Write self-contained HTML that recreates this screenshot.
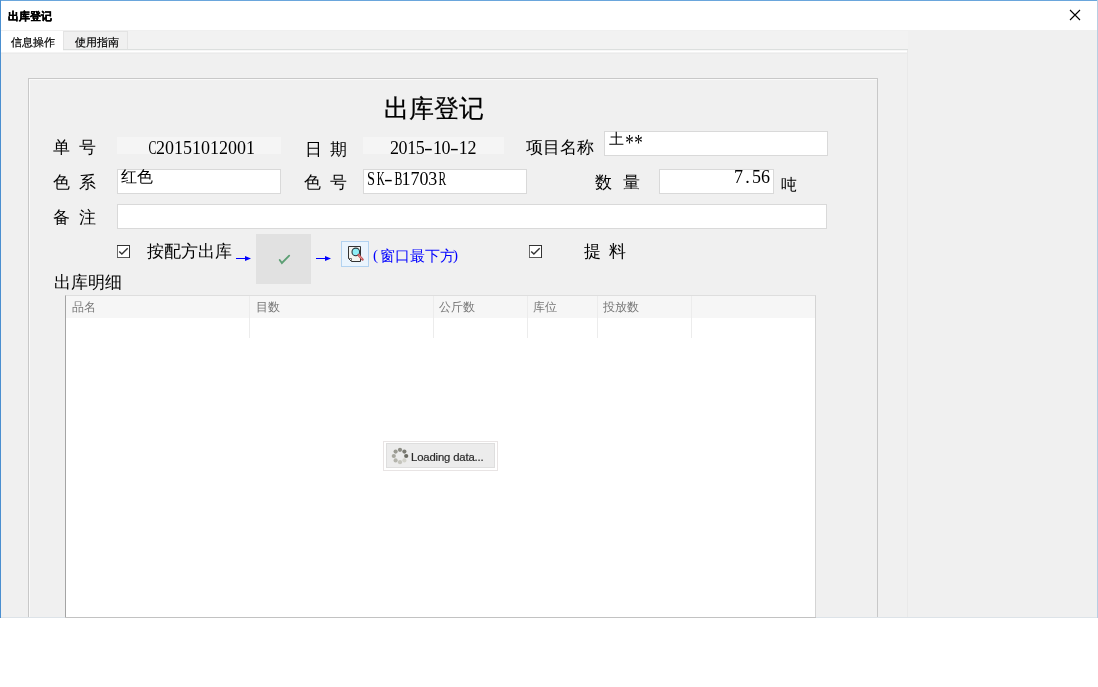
<!DOCTYPE html>
<html><head><meta charset="utf-8">
<style>
html,body{margin:0;padding:0;width:1098px;height:687px;overflow:hidden;background:#fff;font-family:"Liberation Sans",sans-serif;}
.a{position:absolute;}
.t{position:absolute;white-space:nowrap;line-height:1;color:#000;}
#win{position:absolute;left:0;top:0;width:1098px;height:618px;background:#f0f0f0;overflow:hidden;will-change:transform;}
</style></head><body>
<div id="win">
<div class="a" style="left:0px;top:0px;width:1098px;height:30px;background:#fff"></div>
<div class="t" style="left:8px;top:11px;font-size:11px;font-weight:bold;-webkit-text-stroke:0.35px #000">出库登记</div>
<svg class="a" style="left:1069px;top:9px" width="12" height="12" viewBox="0 0 12 12"><path d="M1 1L11 11M11 1L1 11" stroke="#000" stroke-width="1.1" fill="none"/></svg>
<div class="a" style="left:1px;top:30px;width:1096px;height:1px;background:#f0f0f0"></div>
<div class="a" style="left:128px;top:31px;width:780px;height:18px;background:#f2f2f2"></div>
<div class="a" style="left:63px;top:31px;width:65px;height:19px;background:#f0f0f0;border:1px solid #e3e3e3;box-sizing:border-box"></div>
<div class="a" style="left:1px;top:31px;width:62px;height:20px;background:#fff"></div>
<div class="a" style="left:63px;top:49px;width:845px;height:1px;background:#dcdfde"></div>
<div class="a" style="left:63px;top:50px;width:845px;height:1px;background:#f7f7f7"></div>
<div class="a" style="left:1px;top:51px;width:907px;height:1px;background:#fff"></div>
<div class="a" style="left:1px;top:52px;width:907px;height:1px;background:#f3f3f3"></div>
<div class="a" style="left:1px;top:53px;width:907px;height:1px;background:#ebebeb"></div>
<div class="a" style="left:907px;top:50px;width:1px;height:567px;background:#e9e9e9"></div>
<div class="t" style="left:11px;top:37px;font-size:11px;-webkit-text-stroke:0.2px #000">信息操作</div>
<div class="t" style="left:75px;top:37px;font-size:11px;-webkit-text-stroke:0.2px #000">使用指南</div>
<div class="a" style="left:28px;top:78px;width:850px;height:560px;border:1px solid #c8c8c8;box-sizing:border-box;box-shadow:inset 1px 1px 0 #fafafa"></div>
<div class="t" style="left:384px;top:96px;font-size:25px;-webkit-text-stroke:0.25px #000">出库登记</div>
<div class="t" style="left:53px;top:139px;font-size:17px;"><span style="position:absolute;left:0.00px;top:0">单</span></div>
<div class="t" style="left:79px;top:139px;font-size:17px;"><span style="position:absolute;left:0.00px;top:0">号</span></div>
<div class="a" style="left:117px;top:137px;width:164px;height:17px;background:#f5f5f5"></div>
<div class="t" style="left:147px;top:139px;font-size:18px;font-family:'Liberation Serif',serif;color:#000"><span style="position:absolute;left:0.00px;top:0;width:9px;text-align:center;transform:scaleX(0.66)">C</span><span style="position:absolute;left:9.00px;top:0;width:9px;text-align:center;transform:scaleX(1.0)">2</span><span style="position:absolute;left:18.00px;top:0;width:9px;text-align:center;transform:scaleX(1.0)">0</span><span style="position:absolute;left:27.00px;top:0;width:9px;text-align:center;transform:scaleX(1.0)">1</span><span style="position:absolute;left:36.00px;top:0;width:9px;text-align:center;transform:scaleX(1.0)">5</span><span style="position:absolute;left:45.00px;top:0;width:9px;text-align:center;transform:scaleX(1.0)">1</span><span style="position:absolute;left:54.00px;top:0;width:9px;text-align:center;transform:scaleX(1.0)">0</span><span style="position:absolute;left:63.00px;top:0;width:9px;text-align:center;transform:scaleX(1.0)">1</span><span style="position:absolute;left:72.00px;top:0;width:9px;text-align:center;transform:scaleX(1.0)">2</span><span style="position:absolute;left:81.00px;top:0;width:9px;text-align:center;transform:scaleX(1.0)">0</span><span style="position:absolute;left:90.00px;top:0;width:9px;text-align:center;transform:scaleX(1.0)">0</span><span style="position:absolute;left:99.00px;top:0;width:9px;text-align:center;transform:scaleX(1.0)">1</span></div>
<div class="t" style="left:305px;top:141px;font-size:17px;"><span style="position:absolute;left:0.00px;top:0">日</span></div>
<div class="t" style="left:330px;top:141px;font-size:17px;"><span style="position:absolute;left:0.00px;top:0">期</span></div>
<div class="a" style="left:363px;top:137px;width:141px;height:17px;background:#f5f5f5"></div>
<div class="t" style="left:390px;top:139px;font-size:18px;font-family:'Liberation Serif',serif;color:#000"><span style="position:absolute;left:0.00px;top:0;width:8.6px;text-align:center;transform:scaleX(1.0)">2</span><span style="position:absolute;left:8.60px;top:0;width:8.6px;text-align:center;transform:scaleX(1.0)">0</span><span style="position:absolute;left:17.20px;top:0;width:8.6px;text-align:center;transform:scaleX(1.0)">1</span><span style="position:absolute;left:25.80px;top:0;width:8.6px;text-align:center;transform:scaleX(1.0)">5</span><span style="position:absolute;left:34.40px;top:0;width:8.6px;text-align:center;transform:scaleX(1.45)">-</span><span style="position:absolute;left:43.00px;top:0;width:8.6px;text-align:center;transform:scaleX(1.0)">1</span><span style="position:absolute;left:51.60px;top:0;width:8.6px;text-align:center;transform:scaleX(1.0)">0</span><span style="position:absolute;left:60.20px;top:0;width:8.6px;text-align:center;transform:scaleX(1.45)">-</span><span style="position:absolute;left:68.80px;top:0;width:8.6px;text-align:center;transform:scaleX(1.0)">1</span><span style="position:absolute;left:77.40px;top:0;width:8.6px;text-align:center;transform:scaleX(1.0)">2</span></div>
<div class="t" style="left:526px;top:139px;font-size:17px;"><span style="position:absolute;left:0.00px;top:0">项</span><span style="position:absolute;left:17.00px;top:0">目</span><span style="position:absolute;left:34.00px;top:0">名</span><span style="position:absolute;left:51.00px;top:0">称</span></div>
<div class="a" style="left:604px;top:131px;width:224px;height:25px;background:#fff;border:1px solid #d9d9d9;box-sizing:border-box"></div>
<div class="t" style="left:609px;top:131px;font-size:15px;">土</div>
<div class="t" style="left:625px;top:131px;font-size:17px;font-family:'Liberation Serif',serif"><span style="position:absolute;left:0;width:9px;text-align:center;transform:scale(1,1.35);transform-origin:50% 0">*</span><span style="position:absolute;left:9px;width:9px;text-align:center;transform:scale(1,1.35);transform-origin:50% 0">*</span></div>
<div class="t" style="left:53px;top:174px;font-size:17px;"><span style="position:absolute;left:0.00px;top:0">色</span></div>
<div class="t" style="left:79px;top:174px;font-size:17px;"><span style="position:absolute;left:0.00px;top:0">系</span></div>
<div class="a" style="left:117px;top:169px;width:164px;height:25px;background:#fff;border:1px solid #d9d9d9;box-sizing:border-box"></div>
<div class="t" style="left:121px;top:169px;font-size:16px;">红色</div>
<div class="t" style="left:304px;top:174px;font-size:17px;"><span style="position:absolute;left:0.00px;top:0">色</span></div>
<div class="t" style="left:330px;top:174px;font-size:17px;"><span style="position:absolute;left:0.00px;top:0">号</span></div>
<div class="a" style="left:363px;top:169px;width:164px;height:25px;background:#fff;border:1px solid #d9d9d9;box-sizing:border-box"></div>
<div class="t" style="left:366px;top:170px;font-size:18px;font-family:'Liberation Serif',serif;color:#000"><span style="position:absolute;left:0.00px;top:0;width:8.9px;text-align:center;transform:scaleX(0.8)">S</span><span style="position:absolute;left:8.90px;top:0;width:8.9px;text-align:center;transform:scaleX(0.62)">K</span><span style="position:absolute;left:17.80px;top:0;width:8.9px;text-align:center;transform:scaleX(1.45)">-</span><span style="position:absolute;left:26.70px;top:0;width:8.9px;text-align:center;transform:scaleX(0.66)">B</span><span style="position:absolute;left:35.60px;top:0;width:8.9px;text-align:center;transform:scaleX(1.0)">1</span><span style="position:absolute;left:44.50px;top:0;width:8.9px;text-align:center;transform:scaleX(1.0)">7</span><span style="position:absolute;left:53.40px;top:0;width:8.9px;text-align:center;transform:scaleX(1.0)">0</span><span style="position:absolute;left:62.30px;top:0;width:8.9px;text-align:center;transform:scaleX(1.0)">3</span><span style="position:absolute;left:71.20px;top:0;width:8.9px;text-align:center;transform:scaleX(0.64)">R</span></div>
<div class="t" style="left:595px;top:174px;font-size:17px;"><span style="position:absolute;left:0.00px;top:0">数</span></div>
<div class="t" style="left:623px;top:174px;font-size:17px;"><span style="position:absolute;left:0.00px;top:0">量</span></div>
<div class="a" style="left:659px;top:169px;width:115px;height:25px;background:#fff;border:1px solid #d9d9d9;box-sizing:border-box"></div>
<div class="t" style="left:734px;top:168px;font-size:18px;font-family:'Liberation Serif',serif;color:#000"><span style="position:absolute;left:0.00px;top:0;width:9px;text-align:center;transform:scaleX(1.0)">7</span><span style="position:absolute;left:9.00px;top:0;width:9px;text-align:center;transform:scaleX(1.0)">.</span><span style="position:absolute;left:18.00px;top:0;width:9px;text-align:center;transform:scaleX(1.0)">5</span><span style="position:absolute;left:27.00px;top:0;width:9px;text-align:center;transform:scaleX(1.0)">6</span></div>
<div class="t" style="left:781px;top:177px;font-size:16px;">吨</div>
<div class="t" style="left:53px;top:209px;font-size:17px;"><span style="position:absolute;left:0.00px;top:0">备</span></div>
<div class="t" style="left:79px;top:209px;font-size:17px;"><span style="position:absolute;left:0.00px;top:0">注</span></div>
<div class="a" style="left:117px;top:204px;width:710px;height:25px;background:#fff;border:1px solid #d9d9d9;box-sizing:border-box"></div>
<svg class="a" style="left:117px;top:245px" width="13" height="13" viewBox="0 0 13 13"><rect x="0" y="0" width="13" height="13" fill="#fff"/><path d="M0.5 0V13" stroke="#6a6a6a"/><path d="M0 12.5H13" stroke="#5a5a5a"/><path d="M0 0.5H13M12.5 0V13" stroke="#333"/><path d="M2.2 6.4L4.9 9.1L10.7 3.3" stroke="#333" stroke-width="1.4" fill="none"/></svg>
<div class="t" style="left:147px;top:243px;font-size:17px;"><span style="position:absolute;left:0.00px;top:0">按</span><span style="position:absolute;left:17.00px;top:0">配</span><span style="position:absolute;left:34.00px;top:0">方</span><span style="position:absolute;left:51.00px;top:0">出</span><span style="position:absolute;left:68.00px;top:0">库</span></div>
<div class="a" style="left:256px;top:234px;width:55px;height:50px;background:#e1e1e1"></div>
<svg class="a" style="left:256px;top:234px" width="55" height="50" viewBox="0 0 55 50"><path d="M23.7 25.9L25.9 29L33.2 21.6" stroke="#5c9f74" stroke-width="1.8" fill="none" stroke-linecap="round"/></svg>
<svg class="a" style="left:234px;top:254px" width="20" height="9" viewBox="0 0 20 9"><rect x="2" y="4" width="10" height="1" fill="#0000ff"/><path d="M11 2L17 4.5L11 7Z" fill="#0000ff"/></svg>
<svg class="a" style="left:314px;top:254px" width="20" height="9" viewBox="0 0 20 9"><rect x="2" y="4" width="10" height="1" fill="#0000ff"/><path d="M11 2L17 4.5L11 7Z" fill="#0000ff"/></svg>
<svg class="a" style="left:529px;top:245px" width="13" height="13" viewBox="0 0 13 13"><rect x="0" y="0" width="13" height="13" fill="#fff"/><path d="M0.5 0V13" stroke="#6a6a6a"/><path d="M0 12.5H13" stroke="#5a5a5a"/><path d="M0 0.5H13M12.5 0V13" stroke="#333"/><path d="M2.2 6.4L4.9 9.1L10.7 3.3" stroke="#333" stroke-width="1.4" fill="none"/></svg>
<div class="t" style="left:584px;top:243px;font-size:17px;"><span style="position:absolute;left:0.00px;top:0">提</span></div>
<div class="t" style="left:609px;top:243px;font-size:17px;"><span style="position:absolute;left:0.00px;top:0">料</span></div>
<div class="a" style="left:341px;top:241px;width:28px;height:26px;background:#eaf4fd;border:1px solid #b2d2f0;box-sizing:border-box"></div>
<svg class="a" style="left:341px;top:241px" width="28" height="26" viewBox="0 0 28 26"><path d="M7.5 5.5H19.5V20.5H10.5L7.5 17.5Z" fill="#f4f4f0" stroke="#333" stroke-width="1"/><path d="M7.5 17.5L10.5 17.5L10.5 20.5" fill="none" stroke="#555" stroke-width="0.8"/><circle cx="14.8" cy="10.9" r="3.8" fill="#8eeef6" stroke="#2a3a40" stroke-width="1.1"/><path d="M17.5 14L21.5 18.5" stroke="#c05050" stroke-width="2.4" stroke-linecap="round"/><path d="M17.8 14.3L21.2 18.2" stroke="#f0a0a0" stroke-width="0.9"/></svg>
<div class="t" style="left:380px;top:248px;font-size:15px;color:#0000ff"><span style="position:absolute;left:0.00px;top:0">窗</span><span style="position:absolute;left:14.90px;top:0">口</span><span style="position:absolute;left:29.80px;top:0">最</span><span style="position:absolute;left:44.70px;top:0">下</span><span style="position:absolute;left:59.60px;top:0">方</span></div>
<div class="t" style="left:373px;top:248px;font-size:15px;font-family:'Liberation Serif';color:#0000ff">(</div>
<div class="t" style="left:453px;top:248px;font-size:15px;font-family:'Liberation Serif';color:#0000ff">)</div>
<div class="t" style="left:54px;top:274px;font-size:17px;"><span style="position:absolute;left:0.00px;top:0">出</span><span style="position:absolute;left:17.00px;top:0">库</span><span style="position:absolute;left:34.00px;top:0">明</span><span style="position:absolute;left:51.00px;top:0">细</span></div>
<div class="a" style="left:65px;top:295px;width:751px;height:323px;background:#fff;border:1px solid #d4d4d4;border-top-color:#dedede;border-left-color:#a4a4a4;box-sizing:border-box"></div>
<div class="a" style="left:66px;top:296px;width:749px;height:22px;background:#f6f6f6"></div>
<div class="a" style="left:249px;top:296px;width:1px;height:42px;background:#ececec"></div>
<div class="a" style="left:433px;top:296px;width:1px;height:42px;background:#ececec"></div>
<div class="a" style="left:527px;top:296px;width:1px;height:42px;background:#ececec"></div>
<div class="a" style="left:597px;top:296px;width:1px;height:42px;background:#ececec"></div>
<div class="a" style="left:691px;top:296px;width:1px;height:42px;background:#ececec"></div>
<div class="t" style="left:72px;top:301px;font-size:12px;color:#787878">品名</div>
<div class="t" style="left:256px;top:301px;font-size:12px;color:#787878">目数</div>
<div class="t" style="left:439px;top:301px;font-size:12px;color:#787878">公斤数</div>
<div class="t" style="left:533px;top:301px;font-size:12px;color:#787878">库位</div>
<div class="t" style="left:603px;top:301px;font-size:12px;color:#787878">投放数</div>
<div class="a" style="left:383px;top:441px;width:115px;height:30px;border:1px solid #e8e4e4;box-sizing:border-box;background:#fff"></div>
<div class="a" style="left:386px;top:443px;width:109px;height:25px;border:1px solid #dedede;box-sizing:border-box;background:#ececec"></div>
<div class="t" style="left:411px;top:452px;font-size:11.3px;color:#2a2a2a;letter-spacing:-0.15px;-webkit-text-stroke:0.2px #2a2a2a">Loading data...</div>
<svg class="a" style="left:386px;top:443px" width="26" height="26" viewBox="0 0 26 26"><circle cx="14.00" cy="6.80" r="2.1" fill="#8c8c84"/><circle cx="18.38" cy="8.62" r="2.1" fill="#7c7c74"/><circle cx="20.20" cy="13.00" r="2.1" fill="#6c6c64"/><circle cx="18.38" cy="17.38" r="2.1" fill="#d2d2ca"/><circle cx="14.00" cy="19.20" r="2.1" fill="#c4c4bc"/><circle cx="9.62" cy="17.38" r="2.1" fill="#b4b4ac"/><circle cx="7.80" cy="13.00" r="2.1" fill="#a8a8a0"/><circle cx="9.62" cy="8.62" r="2.1" fill="#9a9a92"/></svg>
<div class="a" style="left:0px;top:0px;width:1098px;height:1px;background:#6aa6dc"></div>
<div class="a" style="left:0px;top:0px;width:1px;height:618px;background:#4a8fd0"></div>
<div class="a" style="left:1097px;top:0px;width:1px;height:618px;background:#b8cfe3"></div>
<div class="a" style="left:1px;top:617px;width:1096px;height:1px;background:#dde3e8"></div>
<div class="a" style="left:65px;top:617px;width:751px;height:1px;background:#c2c2c2"></div>
</div>
</body></html>
